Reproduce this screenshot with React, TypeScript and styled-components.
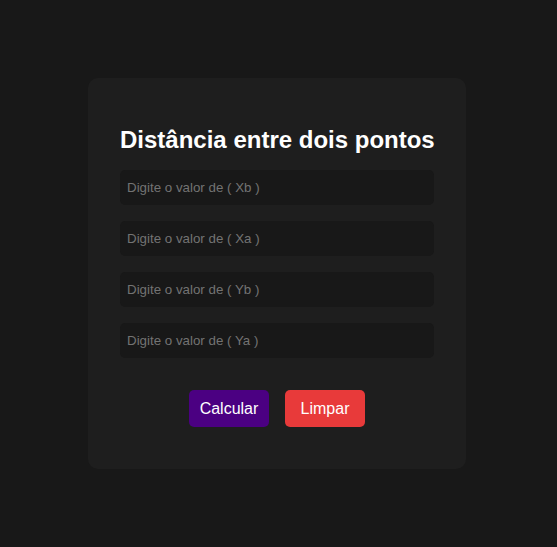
import React, { useState } from "react";
import styled, { createGlobalStyle } from "styled-components";

const Global = createGlobalStyle`
  html, body { margin: 0; padding: 0; background: #181818; }
  * { box-sizing: border-box; }
  body { font-family: "Liberation Sans", Arial, sans-serif; }
`;

const Page = styled.div`
  min-height: 547px;
  display: flex;
  align-items: center;
  justify-content: center;
  padding-right: 3px;
`;

const Card = styled.div`
  width: 378px;
  background: #1e1e1e;
  border-radius: 10px;
  padding: 48px 32px 42px;
  display: flex;
  flex-direction: column;
`;

const Title = styled.h2`
  margin: 0 0 16px;
  font-size: 24px;
  font-weight: 700;
  color: #ffffff;
  text-align: center;
  line-height: 28px;
  white-space: nowrap;
`;

const Fields = styled.div`
  display: flex;
  flex-direction: column;
  gap: 16px;
`;

const Input = styled.input`
  height: 35px;
  width: 100%;
  border: none;
  outline: none;
  border-radius: 5px;
  background: #181818;
  color: #ddd;
  padding: 0 7px;
  font-family: "Liberation Sans", Arial, sans-serif;
  font-size: 13.33px;
  &::placeholder { color: #737373; }
`;

const Actions = styled.div`
  display: flex;
  justify-content: center;
  gap: 16px;
  margin-top: 32px;
`;

const Button = styled.button<{ $bg: string }>`
  width: 80px;
  height: 37px;
  border: none;
  border-radius: 5px;
  background: ${(p) => p.$bg};
  color: #fff;
  font-family: "Liberation Sans", Arial, sans-serif;
  font-size: 16px;
  cursor: pointer;
`;

export default function App() {
  const [vals, setVals] = useState(["", "", "", ""]);
  const labels = ["Xb", "Xa", "Yb", "Ya"];
  return (
    <>
      <Global />
      <Page>
        <Card>
          <Title>Distância entre dois pontos</Title>
          <Fields>
            {labels.map((l, i) => (
              <Input
                key={l}
                placeholder={`Digite o valor de ( ${l} )`}
                value={vals[i]}
                onChange={(e) => {
                  const n = [...vals];
                  n[i] = e.target.value;
                  setVals(n);
                }}
              />
            ))}
          </Fields>
          <Actions>
            <Button $bg="#4b0082">Calcular</Button>
            <Button $bg="#e83a3a" onClick={() => setVals(["", "", "", ""])}>Limpar</Button>
          </Actions>
        </Card>
      </Page>
    </>
  );
}
